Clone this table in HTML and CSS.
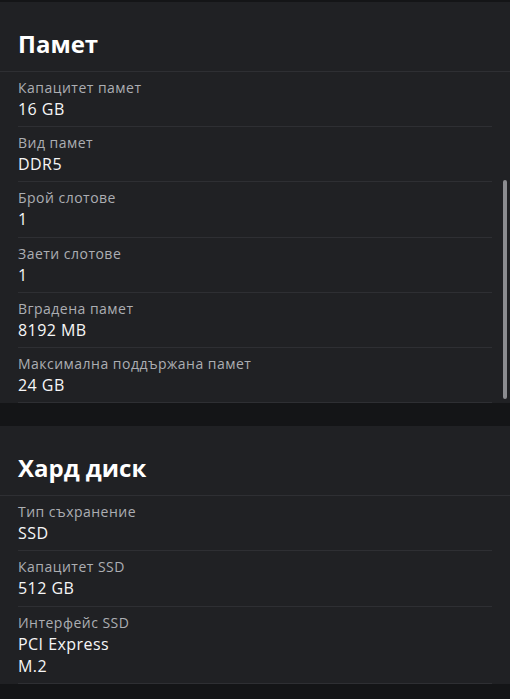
FILE: index.html
```html
<!DOCTYPE html>
<html lang="bg">
<head>
<meta charset="utf-8">
<link rel="stylesheet" href="styles.css">
</head>
<body>
<div class="page">
  <section class="card card-scroll">
    <h2 class="card-title">Памет</h2>
    <div class="rows">
      <div class="row"><div class="label">Капацитет памет</div><div class="value">16 GB</div></div>
      <div class="row"><div class="label">Вид памет</div><div class="value">DDR5</div></div>
      <div class="row"><div class="label">Брой слотове</div><div class="value">1</div></div>
      <div class="row"><div class="label">Заети слотове</div><div class="value">1</div></div>
      <div class="row"><div class="label">Вградена памет</div><div class="value">8192 MB</div></div>
      <div class="row"><div class="label">Максимална поддържана памет</div><div class="value">24 GB</div></div>
    </div>
    <div class="scrollbar"></div>
  </section>
  <section class="card">
    <h2 class="card-title">Хард диск</h2>
    <div class="rows">
      <div class="row"><div class="label">Тип съхранение</div><div class="value">SSD</div></div>
      <div class="row"><div class="label">Капацитет SSD</div><div class="value">512 GB</div></div>
      <div class="row"><div class="label">Интерфейс SSD</div><div class="value">PCI Express</div><div class="value">M.2</div></div>
    </div>
  </section>
</div>
</body>
</html>
```
FILE: styles.css
```css
html, body {
  margin: 0;
  padding: 0;
  background: #141517;
}
body {
  font-family: "Open Sans", "Noto Sans", sans-serif;
  color: #f1f1f2;
}
.page {
  padding-top: 2px;
  display: flex;
  flex-direction: column;
  gap: 23px;
}
.card {
  background: #202124;
  position: relative;
}
.card-title {
  margin: 0;
  padding: 26px 18px 11px;
  font-size: 24px;
  line-height: 32px;
  font-weight: 700;
  color: #ffffff;
  border-bottom: 1px solid #2e2f33;
}
.rows {
  display: flex;
  flex-direction: column;
}
.row {
  margin: 0 18px;
  padding: 6px 0 6.2px;
  border-bottom: 1px solid #2e2f33;
}
.label {
  font-size: 14px;
  line-height: 20px;
  letter-spacing: 0.48px;
  color: #acaeb3;
}
.value {
  font-size: 16px;
  line-height: 22px;
  letter-spacing: 0.45px;
  color: #f6f6f7;
}
.scrollbar {
  position: absolute;
  right: 3px;
  top: 178px;
  width: 4px;
  height: 219px;
  border-radius: 2px;
  background: #8b8c90;
}
```
